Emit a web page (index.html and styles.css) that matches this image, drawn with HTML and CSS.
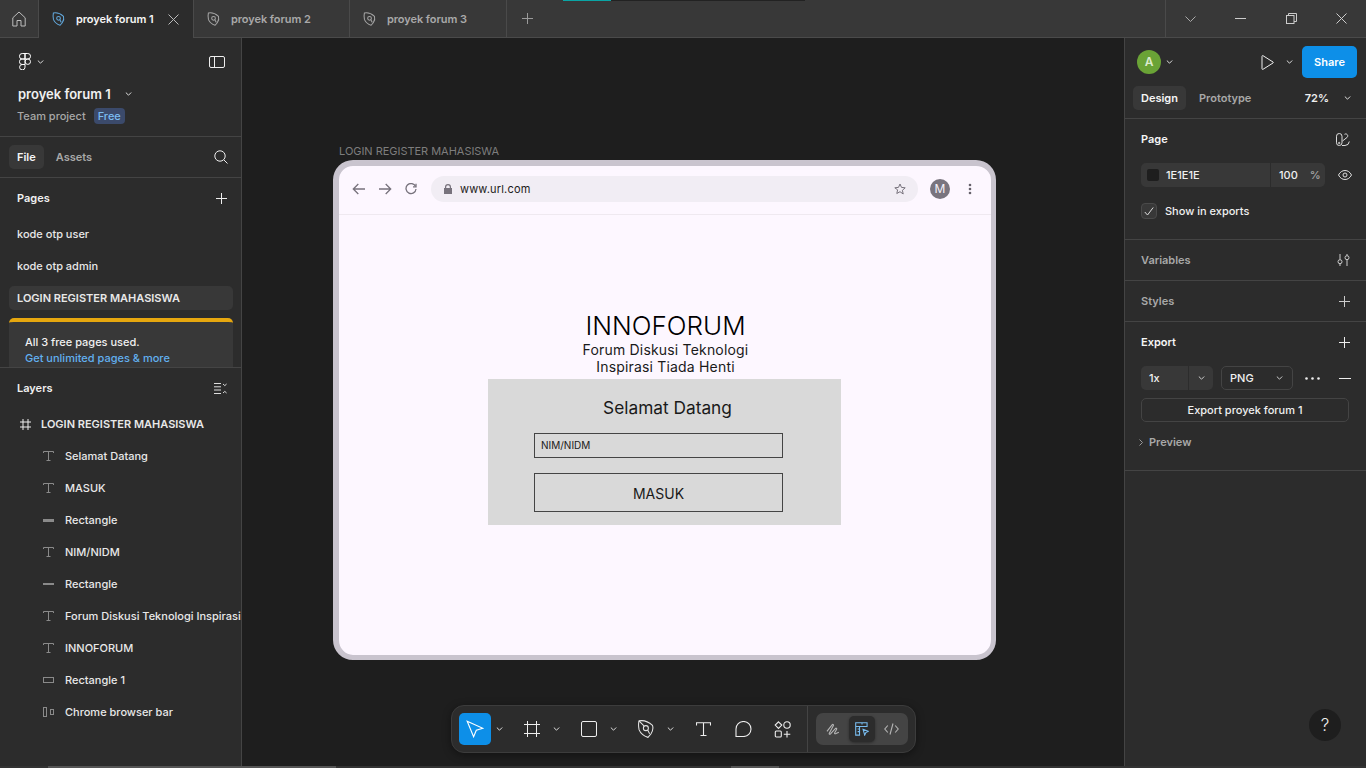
FILE: index.html
```html
<!DOCTYPE html>
<html lang="id">
<head>
	<meta charset="utf-8">
	<title>proyek forum 1</title>
	<link rel="stylesheet" href="styles.css">
</head>
<body>
	<div class="progress"><i></i></div>
	<header class="tabbar">
		<div class="home">
			<svg width="14" height="16" viewBox="0 0 14 16" fill="none" stroke="#bdbdbd"><path d="M.8 6.800 7 1l6.200 5.800V15H9V9.500H5V15H.8z"/></svg>
		</div>
		<div class="tab active">
			<svg class="leaf" width="14" height="16" viewBox="0 0 15 16" fill="none" stroke="#62a8dc" stroke-width="1.100"><path d="M1.500 1.500c3-.6 7.500.6 10.800 3.600.8 2.600.2 4.700-1.300 6.900L8.700 14.700C5.300 13.600 2.700 11.300 1.600 8.700 1 6.200 1 3.800 1.500 1.500z"/><circle cx="7" cy="7.300" r="2"/><path d="m8.400 8.800 1.600 3"/></svg>
			<span class="tab-name">proyek forum 1</span>
			<svg class="tab-x" width="11" height="11" viewBox="0 0 11 11" stroke="#bbb"><path d="m.5.500 10 10m0-10-10 10"/></svg>
		</div>
		<div class="tab second">
			<svg class="leaf" width="14" height="16" viewBox="0 0 15 16" fill="none" stroke="#a5a5a5" stroke-width="1.100"><path d="M1.500 1.500c3-.6 7.500.6 10.800 3.600.8 2.600.2 4.700-1.300 6.900L8.700 14.700C5.300 13.600 2.700 11.300 1.600 8.700 1 6.200 1 3.800 1.500 1.500z"/><circle cx="7" cy="7.300" r="2"/><path d="m8.400 8.800 1.600 3"/></svg>
			<span class="tab-name">proyek forum 2</span>
		</div>
		<div class="tab third">
			<svg class="leaf" width="14" height="16" viewBox="0 0 15 16" fill="none" stroke="#a5a5a5" stroke-width="1.100"><path d="M1.500 1.500c3-.6 7.500.6 10.800 3.600.8 2.600.2 4.700-1.300 6.900L8.700 14.700C5.300 13.600 2.700 11.300 1.600 8.700 1 6.200 1 3.800 1.500 1.500z"/><circle cx="7" cy="7.300" r="2"/><path d="m8.400 8.800 1.600 3"/></svg>
			<span class="tab-name">proyek forum 3</span>
		</div>
		<div class="new-tab">
			<svg width="11" height="11" viewBox="0 0 11 11" stroke="#9a9a9a"><path d="M5.500 0v11M0 5.500h11"/></svg>
		</div>
		<div class="win-controls">
			<svg width="11" height="6" viewBox="0 0 11 6" fill="none" stroke="#aaa"><path d="m.5.500 5 5 5-5"/></svg>
			<svg width="11" height="1" viewBox="0 0 11 1" stroke="#ccc"><path d="M0 .5h11"/></svg>
			<svg width="11" height="11" viewBox="0 0 11 11" fill="none" stroke="#ccc"><rect x=".5" y="2.500" width="7.500" height="8"/><path d="M2.500 2.500V.5h8v8H8"/></svg>
			<svg width="11" height="11" viewBox="0 0 11 11" stroke="#ccc"><path d="m.5.500 10 10m0-10-10 10"/></svg>
		</div>
	</header>

	<div class="workspace">
		<aside class="left-panel">
			<section class="project">
				<div class="logo-row">
					<div class="logo-menu">
						<svg width="12" height="17" viewBox="0 0 12 17" fill="none" stroke="#fff"><path d="M6 .5H3.200a2.700 2.700 0 0 0 0 5.500H6zM6 .5h2.800a2.700 2.700 0 0 1 0 5.500H6zM6 6H3.200a2.700 2.700 0 0 0 0 5.500H6zM6 11.500H3.200A2.700 2.700 0 1 0 6 14.200z"/><circle cx="8.800" cy="8.700" r="2.700"/></svg>
						<svg class="chev" width="7" height="4" viewBox="0 0 7 4" fill="none" stroke="#ddd"><path d="m.8.500 2.700 2.700L6.200.5"/></svg>
					</div>
					<svg width="16" height="12" viewBox="0 0 16 12" fill="none" stroke="#eee"><rect x=".5" y=".5" width="15" height="11" rx="1.500"/><path d="M5.500.5v11"/></svg>
				</div>
				<div class="project-name">proyek forum 1 <svg class="chev" width="7" height="4" viewBox="0 0 7 4" fill="none" stroke="#ddd"><path d="m.8.500 2.700 2.700L6.200.5"/></svg></div>
				<div class="project-meta">Team project <span class="free">Free</span></div>
			</section>

			<section class="file-tabs">
				<span class="pill">File</span>
				<span class="file-tab">Assets</span>
				<svg class="search" width="14" height="14" viewBox="0 0 14 14" fill="none" stroke="#eee"><circle cx="6" cy="6" r="5.200"/><path d="m9.800 9.800 3.700 3.700"/></svg>
			</section>

			<section class="pages">
				<div class="section-head">
					<b>Pages</b>
					<svg width="11" height="11" viewBox="0 0 11 11" stroke="#eee"><path d="M5.500 0v11M0 5.500h11"/></svg>
				</div>
				<div class="page-row">kode otp user</div>
				<div class="page-row">kode otp admin</div>
				<div class="page-row selected">LOGIN REGISTER MAHASISWA</div>
				<div class="upsell">
					<div>All 3 free pages used.</div>
					<div class="link">Get unlimited pages &amp; more</div>
				</div>
			</section>

			<section class="layers">
				<div class="section-head">
					<b>Layers</b>
					<svg width="13" height="11" viewBox="0 0 13 11" fill="none" stroke="#ddd"><path d="M0 .5h7M0 3.800h7M0 7h7M0 10.500h7M9 1l1.800 1.600L12.600 1M9 10l1.800-1.600 1.800 1.600"/></svg>
				</div>
				<div class="layer top-layer">
					<svg width="11" height="11" viewBox="0 0 11 11" stroke="#eee"><path d="M3 0v11M8 0v11M0 3h11M0 8h11"/></svg>
					<span>LOGIN REGISTER MAHASISWA</span>
				</div>
				<div class="layer">
					<svg width="11" height="10" viewBox="0 0 11 10" fill="none" stroke="#8a8a8a"><path d="M.5 2V.5h10V2M5.500.5v9M3.500 9.500h4"/></svg>
					<span>Selamat Datang</span>
				</div>
				<div class="layer">
					<svg width="11" height="10" viewBox="0 0 11 10" fill="none" stroke="#8a8a8a"><path d="M.5 2V.5h10V2M5.500.5v9M3.500 9.500h4"/></svg>
					<span>MASUK</span>
				</div>
				<div class="layer">
					<svg width="11" height="3" viewBox="0 0 11 3"><rect width="11" height="3" fill="#8a8a8a"/></svg>
					<span>Rectangle</span>
				</div>
				<div class="layer">
					<svg width="11" height="10" viewBox="0 0 11 10" fill="none" stroke="#8a8a8a"><path d="M.5 2V.5h10V2M5.500.5v9M3.500 9.500h4"/></svg>
					<span>NIM/NIDM</span>
				</div>
				<div class="layer">
					<svg width="11" height="2" viewBox="0 0 11 2"><rect width="11" height="2" fill="#8a8a8a"/></svg>
					<span>Rectangle</span>
				</div>
				<div class="layer">
					<svg width="11" height="10" viewBox="0 0 11 10" fill="none" stroke="#8a8a8a"><path d="M.5 2V.5h10V2M5.500.5v9M3.500 9.500h4"/></svg>
					<span>Forum Diskusi Teknologi Inspirasi</span>
				</div>
				<div class="layer">
					<svg width="11" height="10" viewBox="0 0 11 10" fill="none" stroke="#8a8a8a"><path d="M.5 2V.5h10V2M5.500.5v9M3.500 9.500h4"/></svg>
					<span>INNOFORUM</span>
				</div>
				<div class="layer">
					<svg width="11" height="6" viewBox="0 0 11 6" fill="none" stroke="#8a8a8a"><rect x=".5" y=".5" width="10" height="5"/></svg>
					<span>Rectangle 1</span>
				</div>
				<div class="layer">
					<svg width="11" height="10" viewBox="0 0 11 10" fill="none" stroke="#8a8a8a"><rect x=".5" y=".5" width="3" height="9"/><rect x="7.500" y="2.500" width="3" height="5"/></svg>
					<span>Chrome browser bar</span>
				</div>
			</section>
		</aside>

		<main class="canvas">
			<div class="frame-label">LOGIN REGISTER MAHASISWA</div>
			<div class="frame">
				<div class="browser-bar">
					<svg width="14" height="12" viewBox="0 0 14 12" fill="none" stroke="#77727c" stroke-width="1.300"><path d="M13 6H1.500M6.300 1 1.300 6l5 5"/></svg>
					<svg width="14" height="12" viewBox="0 0 14 12" fill="none" stroke="#77727c" stroke-width="1.300"><path d="M1 6h11.500M7.700 1l5 5-5 5"/></svg>
					<svg width="12" height="12" viewBox="0 0 12 12" fill="none" stroke="#77727c" stroke-width="1.300"><path d="M10.500 3.300A5 5 0 1 0 11 6"/><path d="M11 .8v3H8" /></svg>
					<div class="url-box">
						<svg width="8" height="10" viewBox="0 0 8 10"><path fill="#77727c" d="M1 4V3a3 3 0 0 1 6 0v1h1v6H0V4zm1.200 0h3.600V3a1.800 1.800 0 0 0-3.600 0z"/></svg>
						<span class="url">www.url.com</span>
						<svg class="star" width="12" height="12" viewBox="0 0 12 12" fill="none" stroke="#77727c"><path d="m6 1 1.500 3.400 3.700.4-2.800 2.500.8 3.700L6 8.700 2.800 10.500l.8-3.700L.8 4.800l3.700-.4z"/></svg>
					</div>
					<div class="avatar-m">M</div>
					<svg class="kebab" width="4" height="12" viewBox="0 0 4 12" fill="#66616b"><circle cx="2" cy="2" r="1.300"/><circle cx="2" cy="6" r="1.300"/><circle cx="2" cy="10" r="1.300"/></svg>
				</div>
				<div class="page-body">
					<h1>INNOFORUM</h1>
					<p class="tagline">Forum Diskusi Teknologi<br>Inspirasi Tiada Henti</p>
					<div class="login-card">
						<h2>Selamat Datang</h2>
						<div class="nim-field">NIM/NIDM</div>
						<div class="masuk-btn">MASUK</div>
					</div>
				</div>
			</div>

			<div class="toolbar">
				<div class="tools">
					<span class="tool current">
						<svg width="18" height="18" viewBox="0 0 18 18" fill="none" stroke="#fff" stroke-width="1.100"><path d="m1.200 1.200 15.600 7-6.500 2-2.700 6.600z"/></svg>
					</span>
					<svg class="chev tool-chev" width="7" height="4" viewBox="0 0 7 4" fill="none" stroke="#ddd"><path d="m.8.500 2.700 2.700L6.200.5"/></svg>
					<span class="tool">
						<svg width="16" height="16" viewBox="0 0 16 16" stroke="#eee"><path d="M3.500 0v16M12.500 0v16M0 3.500h16M0 12.500h16"/></svg>
					</span>
					<svg class="chev tool-chev" width="7" height="4" viewBox="0 0 7 4" fill="none" stroke="#ddd"><path d="m.8.500 2.700 2.700L6.200.5"/></svg>
					<span class="tool">
						<svg width="16" height="16" viewBox="0 0 16 16" fill="none" stroke="#eee"><rect x=".5" y=".5" width="15" height="15" rx="1.500"/></svg>
					</span>
					<svg class="chev tool-chev" width="7" height="4" viewBox="0 0 7 4" fill="none" stroke="#ddd"><path d="m.8.500 2.700 2.700L6.200.5"/></svg>
					<span class="tool">
						<svg width="19" height="20" viewBox="0 0 15 16" fill="none" stroke="#e4e4e4" stroke-width=".85"><path d="M1.500 1.500c3-.6 7.500.6 10.800 3.600.8 2.600.2 4.700-1.300 6.900L8.700 14.700C5.300 13.600 2.700 11.300 1.600 8.700 1 6.200 1 3.800 1.500 1.500z"/><circle cx="7" cy="7.300" r="2"/><path d="m8.400 8.800 1.600 3M1.500 1.500l4 4"/></svg>
					</span>
					<svg class="chev tool-chev" width="7" height="4" viewBox="0 0 7 4" fill="none" stroke="#ddd"><path d="m.8.500 2.700 2.700L6.200.5"/></svg>
					<span class="tool">
						<svg width="15" height="14" viewBox="0 0 15 14" fill="none" stroke="#eee" stroke-width="1.100"><path d="M.5 3.500V.8h14v2.700M7.500.8v12.700M4.500 13.500h6"/></svg>
					</span>
					<span class="tool plain">
						<svg width="17" height="16" viewBox="0 0 17 16" fill="none" stroke="#eee" stroke-width="1.100"><path d="M1 15.500V8a7.500 7.500 0 1 1 7.500 7.500z"/></svg>
					</span>
					<span class="tool plain">
						<svg width="18" height="17" viewBox="0 0 18 17" fill="none" stroke="#eee" stroke-width="1.100"><path d="m4.500.8 3.300 3.300-3.300 3.300L1.200 4.100z"/><circle cx="13" cy="4" r="3.200"/><rect x="1.300" y="10" width="6" height="6" rx="1"/><path d="M13 10v6.500M9.800 13.300h6.500"/></svg>
					</span>
				</div>
				<div class="modes">
					<div class="mode-group">
						<span class="mode">
							<svg width="14" height="13" viewBox="0 0 15 14" fill="none" stroke="#b5b5b5" stroke-width="1.200"><path d="M1 9 6.500 2c1-1 2 0 1.300 1L3.500 11c-.5 1 .5 1.500 1.300.7L10 6c1-1 2 0 1.300 1l-2 3.500c-.5 1 .5 1.500 1.500.8l3-1.300"/></svg>
						</span>
						<span class="mode on">
							<svg width="14" height="14" viewBox="0 0 16 16" fill="none" stroke="#79bdf0" stroke-width="1.200"><path d="M.8 15V.8h13v4.400H5.200V15zM.8 5.200h4.400M3 8h2.200M3 11h2.200M8 .8v2M9.200 8.300l6 2.400-2.700 1.300-1.400 3z"/></svg>
						</span>
						<span class="mode">
							<svg width="15" height="12" viewBox="0 0 15 12" fill="none" stroke="#b5b5b5" stroke-width="1.100"><path d="M3.800 2.500.8 6l3 3.500M11.200 2.500l3 3.500-3 3.500M9 .5 6 11.500"/></svg>
						</span>
					</div>
				</div>
			</div>
		</main>

		<aside class="right-panel">
			<section class="share-block">
				<div class="share-row">
					<span class="avatar">A</span>
					<svg class="chev" width="7" height="4" viewBox="0 0 7 4" fill="none" stroke="#ddd"><path d="m.8.500 2.700 2.700L6.200.5"/></svg>
					<svg class="play" width="13" height="15" viewBox="0 0 13 15" fill="none" stroke="#eee"><path d="M1 1.300c0-.6.500-.9 1-.6l10 6.300c.4.300.4.700 0 1L2 14.300c-.5.300-1 0-1-.6z"/></svg>
					<svg class="chev play-chev" width="7" height="4" viewBox="0 0 7 4" fill="none" stroke="#ddd"><path d="m.8.500 2.700 2.700L6.200.5"/></svg>
					<span class="share">Share</span>
				</div>
				<div class="mode-row">
					<span class="pill">Design</span>
					<span class="file-tab">Prototype</span>
					<span class="zoom">72%</span>
					<svg class="chev" width="7" height="4" viewBox="0 0 7 4" fill="none" stroke="#ddd"><path d="m.8.500 2.700 2.700L6.200.5"/></svg>
				</div>
			</section>

			<section class="prop page-prop">
				<div class="prop-head">
					<b>Page</b>
					<svg width="14" height="13" viewBox="0 0 14 13" fill="none" stroke="#ddd"><rect x=".5" y=".5" width="5.500" height="12" rx="2.700"/><path d="M8.500 1.300c2-1.300 4.300 1 2.700 3L6.500 8M13.300 8.500A4.500 4.500 0 0 1 9 12.500H6"/><circle cx="3.200" cy="10" r=".7"/></svg>
				</div>
				<div class="fill-row">
					<div class="fill-input">
						<span class="swatch"></span>
						<span class="hex">1E1E1E</span>
						<span class="opacity">100</span>
						<span class="pct">%</span>
					</div>
					<svg width="14" height="10" viewBox="0 0 14 10" fill="none" stroke="#ddd"><path d="M.5 5C2 2 4.300.5 7 .5S12 2 13.500 5C12 8 9.700 9.500 7 9.500S2 8 .5 5z"/><circle cx="7" cy="5" r="2"/></svg>
				</div>
				<div class="check-row">
					<span class="check"><svg width="10" height="9" viewBox="0 0 10 9" fill="none" stroke="#ddd"><path d="m.8 5 2.700 3L9.200.5"/></svg></span>
					<span>Show in exports</span>
				</div>
			</section>

			<section class="prop collapsed">
				<div class="prop-head dim">
					<b>Variables</b>
					<svg width="13" height="12" viewBox="0 0 13 12" fill="none" stroke="#ccc"><path d="M3 0v5.500M3 10v2M10 0v1.500M10 6v6"/><circle cx="3" cy="7.700" r="2"/><circle cx="10" cy="3.700" r="2"/></svg>
				</div>
			</section>

			<section class="prop collapsed">
				<div class="prop-head dim">
					<b>Styles</b>
					<svg width="11" height="11" viewBox="0 0 11 11" stroke="#ccc"><path d="M5.500 0v11M0 5.500h11"/></svg>
				</div>
			</section>

			<section class="prop export">
				<div class="prop-head">
					<b>Export</b>
					<svg width="11" height="11" viewBox="0 0 11 11" stroke="#eee"><path d="M5.500 0v11M0 5.500h11"/></svg>
				</div>
				<div class="export-row">
					<div class="scale">
						<span class="scale-value">1x</span>
						<span class="scale-arrow"><svg class="chev" width="7" height="4" viewBox="0 0 7 4" fill="none" stroke="#ccc"><path d="m.8.500 2.700 2.700L6.200.5"/></svg></span>
					</div>
					<div class="format">
						<span>PNG</span>
						<svg class="chev" width="7" height="4" viewBox="0 0 7 4" fill="none" stroke="#ccc"><path d="m.8.500 2.700 2.700L6.200.5"/></svg>
					</div>
					<svg class="dots" width="15" height="3" viewBox="0 0 15 3" fill="#eee"><circle cx="1.500" cy="1.500" r="1.300"/><circle cx="7.500" cy="1.500" r="1.300"/><circle cx="13.500" cy="1.500" r="1.300"/></svg>
					<svg class="minus" width="12" height="1" viewBox="0 0 12 1" stroke="#eee"><path d="M0 .5h12"/></svg>
				</div>
				<div class="export-btn">Export proyek forum 1</div>
				<div class="preview">
					<svg width="4" height="7" viewBox="0 0 4 7" fill="none" stroke="#999"><path d="m.5.500 3 3-3 3"/></svg>
					<b>Preview</b>
				</div>
			</section>
		</aside>
	</div>
	<div class="help">?</div>
	<div class="scroll-track"><i class="thumb-a"></i><i class="thumb-b"></i></div>
</body>
</html>
```

FILE: styles.css
```css
* {
	box-sizing: border-box;
}
html, body {
	margin: 0;
	height: 100%;
}
body {
	width: 1366px;
	height: 768px;
	overflow: hidden;
	position: relative;
	display: flex;
	flex-direction: column;
	background: #1e1e1e;
	color: #f0f0f0;
	font-family: Inter, "Noto Sans", sans-serif;
	font-size: 11px;
	font-weight: 500;
}
svg {
	display: block;
	flex: none;
}
b {
	font-weight: 600;
}
.progress {
	position: absolute;
	left: 563px;
	top: 0;
	width: 242px;
	height: 1px;
	background: #222;
	z-index: 2;
}
.progress i {
	display: block;
	width: 48px;
	height: 1px;
	background: #0aa5a5;
}

/* top tabs */
.tabbar {
	height: 38px;
	flex: none;
	display: flex;
	background: #383838;
	border-bottom: 1px solid #4a4a4a;
}
.home {
	width: 39px;
	display: flex;
	align-items: center;
	justify-content: center;
	border-right: 1px solid #4a4a4a;
}
.tab {
	display: flex;
	align-items: center;
	padding-left: 13px;
	gap: 10px;
	border-right: 1px solid #4a4a4a;
	color: #a9a9a9;
	font-weight: 600;
	letter-spacing: -.06px;
	white-space: nowrap;
}
.tab.active {
	width: 155px;
	background: #2c2c2c;
	color: #f5f5f5;
	margin-bottom: -1px;
}
.tab.second {
	width: 156px;
}
.tab.third {
	width: 157px;
}
.tab-x {
	margin-left: 4px;
}
.new-tab {
	width: 40px;
	display: flex;
	align-items: center;
	justify-content: center;
}
.win-controls {
	margin-left: auto;
	width: 201px;
	border-left: 1px solid #4a4a4a;
	display: flex;
	align-items: center;
	justify-content: space-between;
	padding: 0 19px;
}

.workspace {
	flex: 1;
	display: flex;
	min-height: 0;
}

/* left panel */
.left-panel {
	width: 242px;
	flex: none;
	background: #2c2c2c;
	border-right: 1px solid #444;
	display: flex;
	flex-direction: column;
	overflow: hidden;
}
.project {
	height: 99px;
	flex: none;
	padding: 15px 16px 0 18px;
	border-bottom: 1px solid #444;
}
.logo-row {
	display: flex;
	justify-content: space-between;
	align-items: center;
	padding-left: 1px;
}
.logo-menu {
	display: flex;
	align-items: center;
	gap: 6px;
}
.project-name {
	margin-top: 15px;
	display: flex;
	align-items: center;
	gap: 14px;
	font-size: 13px;
	font-weight: 600;
	line-height: 18px;
}
.project-meta {
	margin-top: 5px;
	margin-left: -1px;
	color: #a8a8a8;
	display: flex;
	align-items: center;
	gap: 8px;
	line-height: 16px;
}
.free {
	background: #3b4a6b;
	color: #7cbcf0;
	border-radius: 4px;
	padding: 0 4px;
}
.file-tabs {
	height: 41px;
	flex: none;
	padding: 0 13px 0 9px;
	display: flex;
	align-items: center;
	gap: 12px;
	border-bottom: 1px solid #444;
}
.pill {
	background: #383838;
	border-radius: 5px;
	height: 24px;
	line-height: 24px;
	padding: 0 8px;
	font-weight: 600;
	color: #f5f5f5;
}
.file-tab {
	color: #a8a8a8;
	font-weight: 600;
}
.search {
	margin-left: auto;
}
.pages {
	height: 190px;
	flex: none;
	padding: 0 8px 0 9px;
	border-bottom: 1px solid #444;
	overflow: hidden;
}
.section-head {
	height: 40px;
	display: flex;
	align-items: center;
	justify-content: space-between;
	padding: 0 6px 0 8px;
	font-size: 11px;
}
.pages .section-head {
	margin-bottom: 4px;
}
.page-row {
	height: 24px;
	line-height: 24px;
	padding-left: 8px;
	margin-bottom: 8px;
	border-radius: 5px;
	color: #e8e8e8;
}
.page-row.selected {
	background: #383838;
	font-weight: 600;
}
.upsell {
	background: #383838;
	border-top: 4px solid #e6a70f;
	border-radius: 5px 5px 0 0;
	padding: 12px 16px;
	line-height: 16px;
	height: 60px;
}
.link {
	color: #62b0f0;
}
.layers .section-head {
	padding: 0 14px 0 17px;
}
.layers {
	flex: 1;
}
.layer {
	height: 32px;
	display: flex;
	align-items: center;
	white-space: nowrap;
	color: #e8e8e8;
}
.layer svg {
	margin-left: 43px;
	margin-right: 11px;
}
.layer.top-layer {
	font-weight: 600;
}
.layer.top-layer svg {
	margin-left: 20px;
	margin-right: 10px;
}

/* canvas */
.canvas {
	flex: 1;
	position: relative;
	background: #1e1e1e;
	min-width: 0;
}
.frame-label {
	position: absolute;
	left: 97px;
	top: 106px;
	color: #7d7d7d;
	font-weight: 400;
	line-height: 14px;
	letter-spacing: -.03px;
}
.frame {
	position: absolute;
	left: 91px;
	top: 122px;
	width: 663px;
	height: 500px;
	background: #fdf7ff;
	border-style: solid;
	border-color: #c9c4ce;
	border-width: 6px 5px 5px 6px;
	border-radius: 20px;
	overflow: hidden;
}
.browser-bar {
	height: 49px;
	display: flex;
	align-items: center;
	border-bottom: 1px solid #efe9f0;
	padding: 0 0 2px 13px;
	color: #1d1b20;
}
.browser-bar > svg:nth-child(2) {
	margin-left: 12px;
}
.browser-bar > svg:nth-child(3) {
	margin-left: 13px;
}
.url-box {
	margin-left: 14px;
	width: 487px;
	height: 26px;
	background: #f1edf4;
	border-radius: 13px;
	display: flex;
	align-items: center;
	padding: 0 12px 0 13px;
	gap: 8px;
}
.url {
	font-size: 11px;
	font-weight: 400;
	letter-spacing: .18px;
}
.star {
	margin-left: auto;
}
.avatar-m {
	margin-left: 12px;
	width: 20px;
	height: 20px;
	border-radius: 50%;
	background: #79747e;
	color: #f5f0f7;
	text-align: center;
	line-height: 20px;
	font-size: 12px;
	font-weight: 400;
}
.kebab {
	margin-left: 18px;
}
.page-body {
	padding-top: 95px;
	color: #1a1a1a;
	font-weight: 400;
	text-align: center;
}
.page-body h1 {
	margin: 0 0 0 1px;
	font-size: 26px;
	font-weight: 300;
	line-height: 31px;
	color: #000;
}
.tagline {
	margin: 0 0 0 1px;
	font-size: 14px;
	line-height: 17px;
	letter-spacing: .18px;
}
.login-card {
	margin: 4px 0 0 149px;
	width: 353px;
	height: 146px;
	background: #d9d9d9;
	padding-top: 18px;
}
.login-card h2 {
	margin: 0 0 14px 6px;
	font-size: 17.3px;
	font-weight: 400;
	line-height: 22px;
}
.nim-field {
	margin-left: 46px;
	width: 249px;
	height: 25px;
	border: 1px solid #444;
	text-align: left;
	padding-left: 6px;
	line-height: 23px;
	font-size: 10px;
}
.masuk-btn {
	margin: 15px 0 0 46px;
	width: 249px;
	height: 39px;
	border: 1px solid #444;
	line-height: 39px;
	font-size: 14px;
}

/* floating toolbar */
.toolbar {
	position: absolute;
	left: 209px;
	top: 667px;
	width: 465px;
	height: 48px;
	background: #2c2c2c;
	border: 1px solid #3c3c3c;
	border-radius: 13px;
	box-shadow: 0 2px 8px rgba(0, 0, 0, .4);
	display: flex;
	align-items: center;
}
.tools {
	flex: 1;
	display: flex;
	align-items: center;
	height: 100%;
	padding-left: 7px;
}
.tool {
	width: 32px;
	height: 32px;
	flex: none;
	border-radius: 5px;
	display: flex;
	align-items: center;
	justify-content: center;
}
.tool.current {
	background: #0d8fe8;
}
.tool.plain {
	margin-left: 8px;
}
.tool-chev {
	margin: 0 13px 0 5px;
}
.modes {
	width: 108px;
	height: 100%;
	flex: none;
	border-left: 1px solid #444;
	display: flex;
	align-items: center;
	padding-left: 8px;
}
.mode-group {
	width: 92px;
	height: 32px;
	background: #444;
	border-radius: 7px;
	display: flex;
	align-items: center;
}
.mode {
	width: 33px;
	height: 26px;
	display: flex;
	align-items: center;
	justify-content: center;
}
.mode.on {
	width: 26px;
	background: #2c2c2c;
	border-radius: 5px;
	box-shadow: 0 1px 3px rgba(0, 0, 0, .35);
}
.help {
	position: absolute;
	left: 1309px;
	top: 709px;
	width: 32px;
	height: 32px;
	border-radius: 50%;
	background: #1e1e1e;
	text-align: center;
	line-height: 32px;
	font-size: 17px;
	font-weight: 300;
	color: #eee;
	z-index: 2;
}
.scroll-track {
	position: absolute;
	left: 0;
	bottom: 0;
	width: 1366px;
	height: 2px;
	background: #333;
	z-index: 2;
}
.scroll-track i {
	position: absolute;
	top: 0;
	height: 2px;
	background: #555;
}
.thumb-a {
	left: 48px;
	width: 288px;
}
.thumb-b {
	left: 731px;
	width: 48px;
}

/* right panel */
.right-panel {
	width: 242px;
	flex: none;
	background: #2c2c2c;
	border-left: 1px solid #444;
}
.share-block {
	height: 81px;
	padding: 8px 9px 0 8px;
	border-bottom: 1px solid #444;
}
.share-row {
	display: flex;
	align-items: center;
	height: 32px;
	padding-left: 4px;
}
.avatar {
	width: 24px;
	height: 24px;
	border-radius: 50%;
	background: #6aa336;
	color: #dcebcd;
	text-align: center;
	line-height: 24px;
	font-size: 12px;
	font-weight: 600;
	margin-right: 5px;
}
.play {
	margin-left: auto;
}
.play-chev {
	margin: 0 9px 0 12px;
}
.share {
	width: 55px;
	height: 32px;
	background: #0d8fe8;
	border-radius: 5px;
	color: #fff;
	text-align: center;
	line-height: 32px;
	font-weight: 600;
}
.mode-row {
	margin-top: 8px;
	display: flex;
	align-items: center;
	gap: 13px;
}
.zoom {
	margin-left: auto;
	font-weight: 600;
	margin-right: 2px;
}
.mode-row .chev {
	margin-right: 6px;
}
.prop {
	padding: 0 16px;
	border-bottom: 1px solid #444;
}
.prop-head {
	height: 40px;
	display: flex;
	align-items: center;
	justify-content: space-between;
	color: #f5f5f5;
}
.prop-head.dim {
	color: #a8a8a8;
}
.page-prop {
	height: 121px;
}
.fill-row {
	display: flex;
	align-items: center;
	justify-content: space-between;
	margin: 4px -2px 0 0;
}
.fill-input {
	width: 184px;
	height: 24px;
	background: #383838;
	border-radius: 5px;
	display: flex;
	align-items: center;
	padding-left: 6px;
}
.swatch {
	width: 12px;
	height: 12px;
	background: #1e1e1e;
	border-radius: 2px;
}
.hex {
	margin-left: 7px;
	width: 105px;
	border-right: 1px solid #2c2c2c;
	line-height: 24px;
}
.opacity {
	margin-left: 8px;
}
.pct {
	margin-left: 12px;
	color: #a8a8a8;
}
.check-row {
	margin-top: 16px;
	display: flex;
	align-items: center;
	gap: 8px;
}
.check {
	width: 16px;
	height: 16px;
	background: #383838;
	border: 1px solid #4a4a4a;
	border-radius: 4px;
	display: flex;
	align-items: center;
	justify-content: center;
}
.collapsed {
	height: 41px;
}
.export {
	height: 149px;
}
.export-row {
	display: flex;
	align-items: center;
	margin-top: 4px;
}
.scale {
	width: 72px;
	height: 24px;
	flex: none;
	background: #383838;
	border-radius: 5px;
	display: flex;
	align-items: center;
}
.scale-value {
	width: 48px;
	padding-left: 8px;
	line-height: 24px;
	border-right: 1px solid #2c2c2c;
}
.scale-arrow {
	flex: 1;
	display: flex;
	justify-content: center;
}
.format {
	margin-left: 8px;
	width: 72px;
	height: 24px;
	flex: none;
	border: 1px solid #444;
	border-radius: 5px;
	display: flex;
	align-items: center;
	justify-content: space-between;
	padding: 0 9px 0 8px;
}
.dots {
	margin-left: 12px;
}
.minus {
	margin-left: 19px;
}
.export-btn {
	margin-top: 8px;
	width: 208px;
	height: 24px;
	border: 1px solid #444;
	border-radius: 5px;
	text-align: center;
	line-height: 22px;
}
.preview {
	margin-top: 12px;
	margin-left: -2px;
	display: flex;
	align-items: center;
	gap: 6px;
	height: 16px;
	color: #a8a8a8;
}
```
